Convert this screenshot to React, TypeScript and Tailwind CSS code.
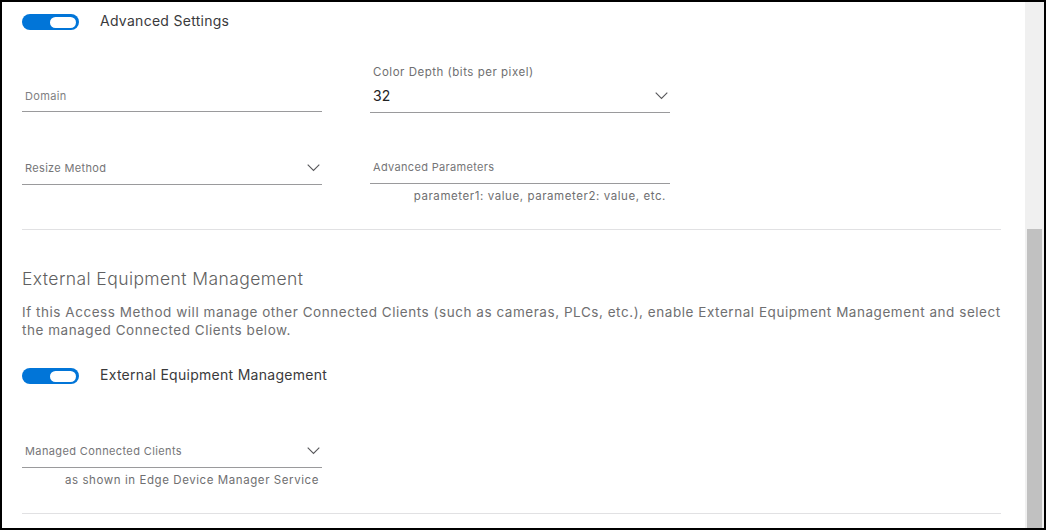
import React from "react";

const font = { fontFamily: "Inter, 'Liberation Sans', sans-serif" };

function Toggle() {
  return (
    <div className="w-[57px] h-[16px] rounded-full bg-[#0175d8] flex items-center justify-end pr-[3px] shrink-0">
      <div className="w-[26px] h-[11px] rounded-full bg-white" />
    </div>
  );
}

function Chevron() {
  return (
    <svg width="13" height="8" viewBox="0 0 13 8" className="shrink-0">
      <path d="M0.7 0.7 L6.5 6.5 L12.3 0.7" fill="none" stroke="#58585b" strokeWidth="1.1" />
    </svg>
  );
}

export default function App() {
  return (
    <div
      className="w-[1046px] h-[530px] border-2 border-black bg-white flex overflow-hidden"
      style={font}
    >
      <div className="flex-1 flex flex-col pl-[20px] pr-[24px]">
        {/* Advanced settings toggle */}
        <div className="flex items-center h-[16px] mt-[12px]">
          <Toggle />
          <span className="ml-[21px] text-[14px] tracking-[0.02em] text-[#3a3a3c] leading-[16px] -translate-y-[1px]">
            Advanced Settings
          </span>
        </div>

        {/* fields grid */}
        <div className="grid grid-cols-[300px_300px] gap-x-[48px] mt-[34px]">
          {/* Domain */}
          <div className="h-[48px] border-b border-[#9a9a9c] flex items-end pb-[7px] pl-[3px]">
            <span className="text-[11px] tracking-[0.03em] leading-[16px] text-[#808082]">Domain</span>
          </div>
          {/* Color depth */}
          <div className="h-[49px] border-b border-[#9a9a9c] flex flex-col pl-[3px] pr-[2px]">
            <span className="text-[11.5px] tracking-[0.045em] leading-[16px] text-[#6f6f71]">Color Depth (bits per pixel)</span>
            <div className="flex items-center justify-between mt-[8px] h-[16px]">
              <span className="text-[14px] leading-[16px] text-[#222224]">32</span>
              <Chevron />
            </div>
          </div>

          {/* Resize method */}
          <div className="mt-[47px] h-[25px] border-b border-[#9a9a9c] flex items-center justify-between pl-[3px] pr-[2px] pb-[8px]">
            <span className="text-[11px] tracking-[0.03em] leading-[16px] text-[#757577]">Resize Method</span>
            <Chevron />
          </div>
          {/* Advanced params */}
          <div className="mt-[46px] flex flex-col">
            <div className="h-[25px] border-b border-[#9a9a9c] flex items-center pl-[3px] pb-[8px]">
              <span className="text-[11px] tracking-[0.03em] leading-[16px] text-[#757577]">Advanced Parameters</span>
            </div>
            <div className="mt-[4px] text-right pr-[4px] text-[11.5px] tracking-[0.05em] leading-[16px] text-[#6f6f71]">
              parameter1: value, parameter2: value, etc.
            </div>
          </div>
        </div>

        <div className="mt-[25px] h-px bg-[#e1e1e3]" />

        <div className="mt-[37px] text-[17.5px] tracking-[0.024em] leading-[24px] font-light text-[#5f5f61]">
          External Equipment Management
        </div>
        <p className="mt-[12px] text-[13.5px] tracking-[0.04em] leading-[18px] text-[#6f6f71] whitespace-nowrap">
          If this Access Method will manage other Connected Clients (such as cameras, PLCs, etc.), enable External Equipment Management and select
          <br />
          the managed Connected Clients below.
        </p>

        <div className="flex items-center h-[16px] mt-[29px]">
          <Toggle />
          <span className="ml-[21px] text-[14px] tracking-[0.02em] text-[#3a3a3c] leading-[16px] -translate-y-[1px]">
            External Equipment Management
          </span>
        </div>

        <div className="w-[300px] mt-[59px] flex flex-col">
          <div className="h-[25px] border-b border-[#9a9a9c] flex items-center justify-between pl-[3px] pr-[2px] pb-[8px]">
            <span className="text-[11px] tracking-[0.035em] leading-[16px] text-[#757577]">Managed Connected Clients</span>
            <Chevron />
          </div>
          <div className="mt-[4px] text-right pr-[3px] text-[11.5px] tracking-[0.05em] leading-[16px] text-[#6f6f71]">
            as shown in Edge Device Manager Service
          </div>
        </div>

        <div className="mt-[25px] h-px bg-[#e1e1e3]" />
      </div>

      {/* scrollbar */}
      <div className="w-[19px] bg-[#f0f0f0] flex flex-col pt-[227px]">
        <div className="flex-1 mx-[2px] bg-[#c1c1c1]" />
      </div>
    </div>
  );
}
